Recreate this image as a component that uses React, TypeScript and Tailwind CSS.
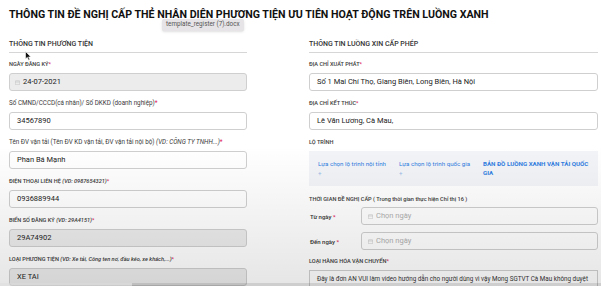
import React from 'react';

const font = { fontFamily: 'Roboto, "Noto Sans", sans-serif' };

const Star = () => <span className="text-[#e0245e]"> *</span>;

const CalIcon = () => (
  <svg width="5" height="5" viewBox="0 0 10 10" className="shrink-0">
    <rect x="0.5" y="1.5" width="9" height="8" rx="1" fill="none" stroke="#b9b9b9" strokeWidth="1" />
    <line x1="0.5" y1="4" x2="9.5" y2="4" stroke="#b9b9b9" strokeWidth="1" />
  </svg>
);

const Label = ({ children, upper }: { children: React.ReactNode; upper?: boolean }) => (
  <div
    className={`h-[9px] mb-[4px] flex items-center whitespace-nowrap text-[#3a3a3a] ${
      upper ? 'text-[5.6px] font-medium' : 'text-[6.3px]'
    }`}
  >
    {children}
  </div>
);

const Input = ({ value, gray, date }: { value: string; gray?: boolean; date?: boolean }) => (
  <div
    className={`h-[18px] mb-[8px] rounded-[3px] border border-[#cfcfcf] flex items-center gap-[3px] text-[7.5px] text-[#222] ${
      date ? 'pl-[5px]' : 'pl-[7px]'
    } ${gray ? 'bg-[#ececec]' : 'bg-white'}`}
  >
    {date && <CalIcon />}
    <span className="whitespace-nowrap">{value}</span>
  </div>
);

const SectionHead = ({ children }: { children: React.ReactNode }) => (
  <div className="h-[13px] border-b border-[#d6d6d6] text-[7px] font-medium text-[#333] leading-[9px] mb-[7px]">
    {children}
  </div>
);

const DateRow = ({ label }: { label: string }) => (
  <div className="flex items-center h-[18px] mb-[7px]">
    <div className="w-[52px] text-[6px] font-medium text-[#333] pl-[1px]">
      {label}
      <Star />
    </div>
    <div className="flex-1 h-full rounded-[3px] border border-[#cfcfcf] bg-white flex items-center gap-[3px] pl-[6px] text-[7.5px] text-[#b0b0b0]">
      <CalIcon />
      <span>Chọn ngày</span>
    </div>
  </div>
);

export default function App() {
  return (
    <div className="relative w-[601px] h-[286px] overflow-hidden bg-white" style={font}>
      <h1 className="pl-[9px] pt-[8px] h-[22px] text-[10.65px] font-bold text-[#111] leading-[14px] whitespace-nowrap">
        THÔNG TIN ĐỀ NGHỊ CẤP THẺ NHẬN DIỆN PHƯƠNG TIỆN ƯU TIÊN HOẠT ĐỘNG TRÊN LUỒNG XANH
      </h1>

      <div className="flex gap-[62px] pl-[9px] pr-[3px] mt-[18px]">
        {/* cột trái */}
        <div className="w-[238px] shrink-0">
          <SectionHead>THÔNG TIN PHƯƠNG TIỆN</SectionHead>
          <Label upper>
            NGÀY ĐĂNG KÝ<Star />
          </Label>
          <Input value="24-07-2021" gray date />
          <Label>
            Số CMND/CCCD(cá nhân)/ Số DKKD (doanh nghiệp)<Star />
          </Label>
          <Input value="34567890" />
          <Label>
            Tên ĐV vận tải (Tên ĐV KD vận tải, ĐV vận tải nội bộ)&nbsp;<i>(VD: CÔNG TY TNHH...)</i>
            <Star />
          </Label>
          <Input value="Phan Bá Mạnh" />
          <Label upper>
            ĐIỆN THOẠI LIÊN HỆ&nbsp;<i>(VD: 0987654321)</i>
            <Star />
          </Label>
          <Input value="0936889944" />
          <Label upper>
            BIỂN SỐ ĐĂNG KÝ&nbsp;<i>(VD: 29A4151)</i>
            <span className="text-[#e0245e]">*</span>
          </Label>
          <Input value="29A74902" gray />
          <Label upper>
            LOẠI PHƯƠNG TIỆN&nbsp;<i>(VD: Xe tải, Công ten nơ, đầu kéo, xe khách,...)</i>
            <Star />
          </Label>
          <Input value="XE TAI" gray />
        </div>

        {/* cột phải */}
        <div className="flex-1">
          <SectionHead>THÔNG TIN LUỒNG XIN CẤP PHÉP</SectionHead>
          <Label upper>
            ĐỊA CHỈ XUẤT PHÁT<Star />
          </Label>
          <Input value="Số 1 Mai Chí Thọ, Giang Biên, Long Biên, Hà Nội" />
          <Label upper>
            ĐỊA CHỈ KẾT THÚC<Star />
          </Label>
          <Input value="Lê Văn Lương, Cà Mau," />
          <Label upper>LỘ TRÌNH</Label>
          <div className="h-[35px] bg-[#f3f4f8] flex pl-[9px] pt-[9px] text-[6.2px] text-[#2f7de1] leading-[9px]">
            <div className="w-[81px]">
              <div>Lựa chọn lộ trình nội tỉnh</div>
              <div className="text-[#9bbbe8]">+</div>
            </div>
            <div className="w-[84px]">
              <div>Lựa chọn lộ trình quốc gia</div>
              <div className="text-[#9bbbe8]">+</div>
            </div>
            <div className="w-[110px] font-bold text-[6.2px]">BẢN ĐỒ LUỒNG XANH VẬN TẢI QUỐC GIA</div>
          </div>
          <div className="h-[9px] mt-[9px] mb-[3px] flex items-center text-[5.6px] font-medium text-[#3a3a3a] whitespace-nowrap">
            THỜI GIAN ĐỀ NGHỊ CẤP ( Trong thời gian thực hiện Chỉ thị 16 )
          </div>
          <DateRow label="Từ ngày" />
          <DateRow label="Đến ngày" />
          <Label upper>
            LOẠI HÀNG HÓA VẬN CHUYỂN<Star />
          </Label>
          <div className="h-[20px] border border-[#cfcfcf] bg-white pl-[7px] pt-[4px] text-[6.3px] text-[#333] whitespace-nowrap">
            Đây là đơn AN VUI làm video hướng dẫn cho người dùng vì vậy Mong SGTVT Cà Mau không duyệt
          </div>
        </div>
      </div>

      {/* tooltip tên file */}
      <div className="absolute left-[162px] top-[19px] h-[12px] px-[4px] rounded-[2px] bg-[#e6e4e6] shadow-sm flex items-center text-[6.3px] text-[#555]">
        template_register (7).docx
      </div>

      {/* con trỏ chuột */}
      <svg className="absolute left-[25px] top-[51px]" width="7" height="10" viewBox="0 0 7 10">
        <path d="M0.5 0.5 L0.5 8 L2.3 6.3 L3.6 9.3 L4.8 8.8 L3.6 5.9 L6 5.9 Z" fill="#111" stroke="#fff" strokeWidth="0.6" />
      </svg>

      {/* lớp mờ video */}
      <div className="pointer-events-none absolute left-0 right-0 bottom-0 h-[140px] bg-gradient-to-b from-transparent to-black/10" />
      <div className="pointer-events-none absolute left-0 right-0 bottom-0 h-[3px] bg-black/10">
        <div className="h-full w-[132px] bg-white/40" />
      </div>
    </div>
  );
}
